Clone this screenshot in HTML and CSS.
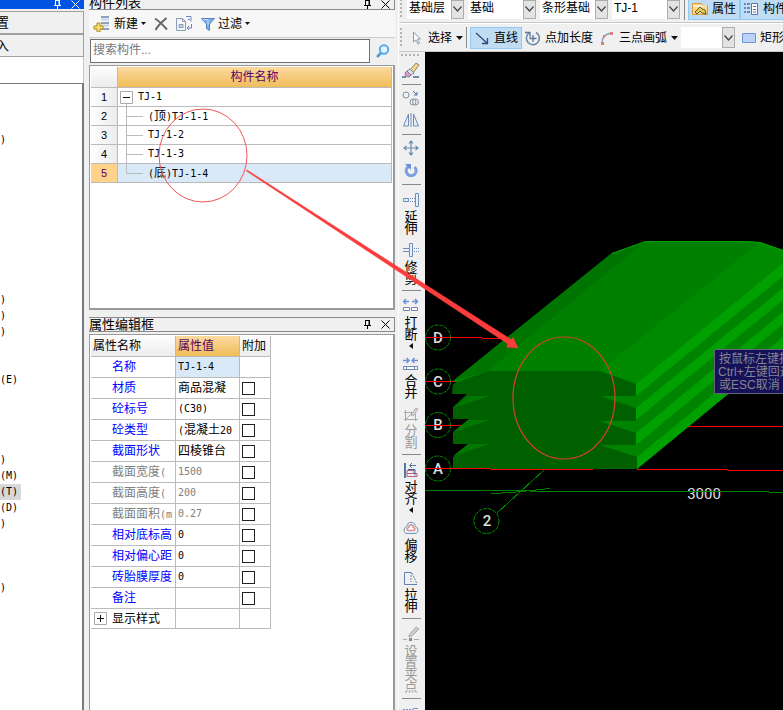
FILE: index.html
```html
<!DOCTYPE html>
<html lang="zh-CN">
<head>
<meta charset="utf-8">
<title>构件列表</title>
<link rel="stylesheet" href="styles.css">
</head>
<body>
<svg class="defs" width="0" height="0" aria-hidden="true">
  <symbol id="pin" viewBox="0 0 9 9"><path d="M2.500 0v5M2 .5h5M6 0v5M6.500 0v5M1 5.500h7M4.500 6v3" fill="none" stroke="currentColor"/></symbol>
  <symbol id="close" viewBox="0 0 9 9"><path d="M.5 .5l8 8M8.500 .5l-8 8" fill="none" stroke="currentColor"/></symbol>
  <symbol id="chev" viewBox="0 0 9 6"><path d="M.5 .5l4 4.500 4-4.500" fill="none" stroke="#444" stroke-width="1.200"/></symbol>
  <symbol id="down" viewBox="0 0 7 4"><path d="M0 0h7L3.500 4z" fill="#111"/></symbol>
  <symbol id="left" viewBox="0 0 4 6"><path d="M4 0v6L0 3z" fill="#111"/></symbol>
</svg>
<main class="app">
  <aside class="nav">
    <header class="nav-title">
      <svg width="9" height="9"><use href="#pin"/></svg>
      <svg width="9" height="9"><use href="#close"/></svg>
    </header>
    <button class="nav-btn">置</button>
    <button class="nav-btn">入</button>
    <div class="nav-gap"></div>
    <ul class="tree">
      <li></li><li></li><li></li><li>)</li><li></li><li></li><li></li><li></li><li></li><li></li><li></li><li></li><li></li>
      <li>)</li><li>)</li><li>)</li><li></li><li></li><li>(E)</li><li></li><li></li><li></li><li></li>
      <li>)</li><li>(M)</li><li><span class="current">(T)</span></li><li>(D)</li><li>)</li><li></li><li></li><li></li><li>)</li>
    </ul>
  </aside>

  <section class="middle">
    <header class="dock-title dock-title-top">
      <h2>构件列表</h2>
      <svg width="9" height="9"><use href="#pin"/></svg>
      <svg width="9" height="9"><use href="#close"/></svg>
    </header>
    <div class="list-tools">
      <button class="flat"><svg width="18" height="16" viewBox="0 0 18 16"><path d="M8 1h8M8 7h8M8 13h8" stroke="#6f87a5" stroke-width="1.500"/><path d="M8 3.500h8M8 9.500h8" stroke="#c5d4e6" stroke-width="2"/><path d="M4 8h3v3h3v3H7v3H4v-3H1v-3h3z" transform="translate(0 -1)" fill="#f6df62" stroke="#a98c2c"/></svg>新建<svg width="5" height="3"><use href="#down"/></svg></button>
      <button class="flat" aria-label="删除"><svg width="14" height="14" viewBox="0 0 14 14"><path d="M1 1.500C5 4 9 8 13 12.500M12.500 1C8 5 4 8 1.500 13" fill="none" stroke="#666" stroke-width="2"/></svg></button>
      <button class="flat" aria-label="复制"><svg width="17" height="15" viewBox="0 0 17 15"><path d="M.5 2.500h6l3 3v9h-9zM6.500 2.500v3h3" fill="#f4f6fa" stroke="#8b9ab5"/><path d="M3 8.500h4v3H3z" fill="#c7d2e4" stroke="#8b9ab5"/><path d="M10 .5h5v5M11 12h4.500V8M13 10l-2 2 2 2M12 3.500h2" fill="none" stroke="#6c86c4"/></svg></button>
      <button class="flat"><svg width="14" height="14" viewBox="0 0 14 14"><path d="M.5 1.500h13L8.500 7v6.500l-3-2V7z" fill="#7daef0" stroke="#5380c4"/><path d="M2 2.500h5v6" fill="none" stroke="#c4ddfb"/></svg>过滤<svg width="5" height="3"><use href="#down"/></svg></button>
    </div>
    <div class="search">
      <input type="text" placeholder="搜索构件..." aria-label="搜索构件">
      <button aria-label="搜索"><svg width="14" height="14" viewBox="0 0 14 14"><circle cx="8" cy="5.500" r="4.200" fill="#e2f4ff" stroke="#55aeea" stroke-width="2"/><path d="M5 9l-4 4" stroke="#4a9ada" stroke-width="2.500"/></svg></button>
    </div>
    <div class="list-pane">
      <table class="list">
        <colgroup><col class="num-col"><col></colgroup>
        <thead><tr><th></th><th class="hot">构件名称</th></tr></thead>
        <tbody>
          <tr><th>1</th><td><div class="node"><svg width="13" height="19" viewBox="0 0 13 19"><path d="M.5 3.500h12v12H.5z" fill="#fff" stroke="#aaa"/><path d="M3 9.500h7" stroke="#111"/><path d="M6.500 16v3" stroke="#bbb"/></svg><span class="m">TJ-1</span></div></td></tr>
          <tr><th>2</th><td><div class="node child"><svg width="17" height="19"><path d="M.5 0v19M0 9.500h17" stroke="#bbb"/></svg><span class="m">(<span class="c">顶</span>)TJ-1-1</span></div></td></tr>
          <tr><th>3</th><td><div class="node child"><svg width="17" height="19"><path d="M.5 0v19M0 9.500h17" stroke="#bbb"/></svg><span class="m">TJ-1-2</span></div></td></tr>
          <tr><th>4</th><td><div class="node child"><svg width="17" height="19"><path d="M.5 0v19M0 9.500h17" stroke="#bbb"/></svg><span class="m">TJ-1-3</span></div></td></tr>
          <tr class="selected"><th>5</th><td><div class="node child"><svg width="17" height="19"><path d="M.5 0v10M0 9.500h17" stroke="#bbb"/></svg><span class="m">(<span class="c">底</span>)TJ-1-4</span></div></td></tr>
        </tbody>
      </table>
    </div>
    <header class="dock-title">
      <h2>属性编辑框</h2>
      <svg width="9" height="9"><use href="#pin"/></svg>
      <svg width="9" height="9"><use href="#close"/></svg>
    </header>
    <div class="prop-pane">
      <table class="props">
        <colgroup><col class="name-col"><col class="value-col"><col class="extra-col"></colgroup>
        <thead><tr><th>属性名称</th><th class="hot">属性值</th><th>附加</th></tr></thead>
        <tbody>
          <tr><th>名称</th><td class="active m">TJ-1-4</td><td></td></tr>
          <tr><th>材质</th><td>商品混凝</td><td><input type="checkbox" aria-label="材质"></td></tr>
          <tr><th>砼标号</th><td class="m">(C30)</td><td><input type="checkbox" aria-label="砼标号"></td></tr>
          <tr><th>砼类型</th><td><span class="m">(</span>混凝土<span class="m">20</span></td><td><input type="checkbox" aria-label="砼类型"></td></tr>
          <tr><th>截面形状</th><td>四棱锥台</td><td><input type="checkbox" aria-label="截面形状"></td></tr>
          <tr class="off"><th>截面宽度<span class="m">(</span></th><td class="m">1500</td><td><input type="checkbox" aria-label="截面宽度"></td></tr>
          <tr class="off"><th>截面高度<span class="m">(</span></th><td class="m">200</td><td><input type="checkbox" aria-label="截面高度"></td></tr>
          <tr class="off"><th>截面面积<span class="m">(m</span></th><td class="m">0.27</td><td><input type="checkbox" aria-label="截面面积"></td></tr>
          <tr><th>相对底标高</th><td class="m">0</td><td><input type="checkbox" aria-label="相对底标高"></td></tr>
          <tr><th>相对偏心距</th><td class="m">0</td><td><input type="checkbox" aria-label="相对偏心距"></td></tr>
          <tr><th>砖胎膜厚度</th><td class="m">0</td><td><input type="checkbox" aria-label="砖胎膜厚度"></td></tr>
          <tr><th>备注</th><td></td><td><input type="checkbox" aria-label="备注"></td></tr>
          <tr class="group"><th><div class="node"><svg width="13" height="13"><path d="M.5 .5h12v12H.5z" fill="#fff" stroke="#aaa"/><path d="M3 6.500h7M6.500 3v7" stroke="#111"/></svg>显示样式</div></th><td></td><td></td></tr>
        </tbody>
      </table>
    </div>
  </section>

  <section class="work">
    <div class="bar bar-top">
      <span class="grip"></span>
      <span class="combo w-s"><select aria-label="楼层"><option>基础层</option></select><i><svg width="9" height="6"><use href="#chev"/></svg></i></span>
      <span class="combo w-m"><select aria-label="类别"><option>基础</option></select><i><svg width="9" height="6"><use href="#chev"/></svg></i></span>
      <span class="combo w-m"><select aria-label="构件类型"><option>条形基础</option></select><i><svg width="9" height="6"><use href="#chev"/></svg></i></span>
      <span class="combo w-m"><select aria-label="构件"><option>TJ-1</option></select><i><svg width="9" height="6"><use href="#chev"/></svg></i></span>
      <span class="vsep"></span>
      <button class="tool on"><svg width="16" height="14" viewBox="0 0 16 14"><path d="M.5 1.500h9l1 2h5v9H.5z" fill="#f7d98a" stroke="#d89a3c"/><path d="M1 4h14" stroke="#fff"/><path d="M3 10l5-5 2 2 3 1 1 4-4-1-2-2-3 3z" fill="#e9cf58" stroke="#665633"/></svg>属性</button>
      <button class="tool on"><svg width="15" height="14" viewBox="0 0 15 14"><path d="M0 2h2M3 2h3M0 6h2M3 6h3M0 10h2M3 10h3" stroke="#4a6da8" stroke-width="1.500"/><path d="M7.500 1.500h6v11h-6z" fill="#fff" stroke="#5475a8"/><path d="M9 4.500h3M9 7.500h3M9 10h3" stroke="#4a6da8"/></svg>构件</button>
    </div>
    <div class="bar bar-draw">
      <span class="grip"></span>
      <button class="tool"><svg width="16" height="16" viewBox="0 0 16 16"><path d="M5.500 2v10l2.500-2 2 4 1.500-1-2-4h3z" fill="#f6f8fa" stroke="#8d9bab"/></svg>选择<svg width="7" height="4"><use href="#down"/></svg></button>
      <span class="vsep"></span>
      <button class="tool on"><svg width="16" height="16" viewBox="0 0 16 16"><path d="M2 3l11 10M13.500 8v5.500H8" fill="none" stroke="#2c4a7c" stroke-width="1.300"/></svg>直线</button>
      <button class="tool"><svg width="16" height="16" viewBox="0 0 16 16"><path d="M4 3A6.500 6.500 0 1 0 11 2.500" fill="none" stroke="#6a84a8" stroke-width="1.500"/><path d="M0 2.500h5v5M8 5v7M4.500 8.500h7" fill="none" stroke="#5a7396" stroke-width="1.300"/></svg>点加长度</button>
      <button class="tool"><svg width="16" height="16" viewBox="0 0 16 16"><path d="M3 14c-.5-6 3-10 9-11" fill="none" stroke="#7b98c4" stroke-width="1.300"/><path d="M2 12h3v3H2zM4 5h2v3H4zM11 2h3v3h-3z" fill="#d98575"/></svg>三点画弧<svg width="7" height="4"><use href="#down"/></svg></button>
      <span class="combo w-d"><select aria-label="画弧方式"><option></option></select><i><svg width="9" height="6"><use href="#chev"/></svg></i></span>
      <button class="tool"><svg width="14" height="10" viewBox="0 0 14 10"><path d="M.5 .5h13v9H.5z" fill="#bdd2fa" stroke="#6d93dd"/></svg>矩形</button>
    </div>
    <div class="stage">
      <nav class="vbar">
        <span class="hgrip"></span>
        <button class="ico" aria-label="删除"><svg width="18" height="16" viewBox="0 0 18 16"><path d="M8 8l6-7 3 2-6 8z" fill="#f1d692" stroke="#8b8775"/><path d="M5 9l4 4-2 2c-2 0-4-1-4-4z" fill="#e39ac4" stroke="#8a7389"/><path d="M8 7l4 4-3 2-4-4z" fill="#dce7f1" stroke="#71869c"/><path d="M0 15h4M11 15h6" stroke="#416a94" stroke-width="1.500"/></svg></button>
        <hr>
        <button class="ico" aria-label="复制"><svg width="18" height="16" viewBox="0 0 18 16" fill="none" stroke="#8292a6"><circle cx="4" cy="5" r="3"/><circle cx="11" cy="12" r="3"/><circle cx="13.500" cy="12" r="3"/><path d="M11 1l4 4M15 2v3h-3" stroke="#4b719d"/></svg></button>
        <button class="ico" aria-label="镜像"><svg width="16" height="16" viewBox="0 0 16 16" fill="#e4edfb" stroke="#6f8db6"><path d="M5.500 2v12h-5zM10.500 2v12h5z"/><path d="M8 1v14"/></svg></button>
        <hr>
        <button class="ico" aria-label="移动"><svg width="16" height="16" viewBox="0 0 16 16" fill="none" stroke="#6a8bb0" stroke-width="1.200"><path d="M8 1v14M1 8h14M6 3.500l2-2.500 2 2.500M6 12.500L8 15l2-2.500M3.500 6L1 8l2.500 2M12.500 6L15 8l-2.500 2"/></svg></button>
        <button class="ico" aria-label="旋转"><svg width="16" height="16" viewBox="0 0 16 16"><path d="M11.500 5a5 5 0 1 1-6-.5" fill="none" stroke="#7b9fe0" stroke-width="3"/><path d="M2 2h6v6z" fill="#6a8fd8"/></svg></button>
        <hr>
        <button><svg width="16" height="16" viewBox="0 0 16 16" fill="#e7f1fc" stroke="#6c8fbc"><path d="M.5 6.500h5v3h-5zM12.500 1.500h3v13h-3z"/><path d="M7 6.500h5M7 9.500h5" stroke-dasharray="1 1"/></svg><span>延伸</span></button>
        <button><svg width="16" height="16" viewBox="0 0 16 16" fill="#e7f1fc" stroke="#6c8fbc"><path d="M0 6.500h6M0 9.500h6M6.500 1.500h3v13h-3z"/><path d="M11 6.500h5M11 9.500h5" stroke-dasharray="1 1"/></svg><span>修剪</span></button>
        <hr>
        <button><svg width="16" height="16" viewBox="0 0 16 16" fill="#fff" stroke="#7187b3"><path d="M.5 9.500h6v3h-6zM8.500 9.500h6v3h-6z"/><path d="M0 3.500h6M3 1L.5 3.500 3 6M9 3.500h6M12 1l2.500 2.500L12 6" fill="none" stroke="#6c93da" stroke-width="1.500"/></svg><span>打断</span><svg class="more" width="4" height="6"><use href="#left"/></svg></button>
        <button><svg width="16" height="16" viewBox="0 0 16 16" fill="#fff" stroke="#7187b3"><path d="M.5 10.500h3v3h-3zM3.500 10.500h8v3h-8zM11.500 10.500h3v3h-3z"/><path d="M0 4.500h6M3.500 2L6 4.500 3.500 7M9 4.500h6M11.500 2L9 4.500 11.500 7" fill="none" stroke="#6c93da" stroke-width="1.500"/></svg><span>合并</span></button>
        <button disabled><svg width="16" height="16" viewBox="0 0 16 16" fill="none" stroke="#a8a8a8"><path d="M1 6.500h10M1 13.500h14M2.500 4v11M12.500 8v7M2 14L14 2"/><path d="M8 9l5-7 2 1-5 7z" fill="#ddd"/></svg><span>分割</span></button>
        <hr>
        <button><svg width="16" height="16" viewBox="0 0 16 16" fill="none" stroke="#58799f"><path d="M2 1v15" stroke-width="2"/><path d="M7 3.500h6M9 1L6.500 3.500 9 6"/><path d="M4 8.500h7v3H4zM4 11.500h10v3H4z" stroke="#b75d7e"/><path d="M5 7.500h7v6" stroke="#4b64a5"/></svg><span>对齐</span><svg class="more" width="4" height="6"><use href="#left"/></svg></button>
        <button><svg width="16" height="16" viewBox="0 0 16 16"><path d="M4 6c0-5 8-5 8 0 4 2 4 7 0 7.500H4C0 13 0 8 4 6z" fill="#e7f0f8" stroke="#6f93b7"/><path d="M6 7c0-3 4-3 4 0 2 1 3 3 0 3.500H6C3 10 4 8 6 7z" fill="#fff" stroke="#dc9393" stroke-width="1.500"/></svg><span>偏移</span></button>
        <button><svg width="16" height="16" viewBox="0 0 16 16" fill="none" stroke="#5f83b3"><path d="M8 2.500H1.500v12H14"/><path d="M8 2v10M9 3l5 11" stroke-dasharray="2 1"/></svg><span>拉伸</span></button>
        <hr>
        <button disabled><svg width="16" height="16" viewBox="0 0 16 16"><path d="M6 9l7-8 3 2-7 7-3 1z" fill="#ccc" stroke="#aaa"/><path d="M0 13.500h4M11 13.500h5" stroke="#aaa"/><path d="M6 12h3v3H6z" fill="#888"/></svg><span>设置夹点</span></button>
        <hr>
        <button aria-label="更多"><svg width="16" height="16" viewBox="0 0 16 16"><path d="M0 3.500h10M1.500 6h8" stroke="#6e94c2" stroke-dasharray="2 1"/><path d="M10 2.500h5" stroke="#6e94c2"/></svg></button>
      </nav>
      <div class="view">
        <svg width="358" height="658" viewBox="425 52 358 658">
          <g fill="none" stroke="#f00" shape-rendering="crispEdges"><path d="M425 337.500h57M482 338.500h25M425 381.500h30M425 425.500h38M688 426.500h95M637 469.500h91M728 470.500h55"/></g>
          <g fill="none" stroke="#008000" shape-rendering="crispEdges"><path d="M425 490.500h105M530 491.500h239M769 492.500h14M491 493.500l20-1 20-2 19-2M544 470l-47 43"/></g>
          <path d="M453 381L612 253l34-12h94l20 1 23 8v99L637 469z" fill="#008400"/>
          <path d="M453 381L612 253l34-12L488 371z" fill="#007400"/>
          <path d="M488 371L646 241h94l20 1L600 371z" fill="#008000"/>
          <path d="M600 371L760 242l23 8v13L636 384z" fill="#008a00"/>
          <path d="M636 384l147-121v13L636 396zM636 408l147-120v12L636 420zM636 433l147-121v12L636 445zM637 457l146-120v12L637 469z" fill="#00a000"/>
          <path d="M612 253.500l34-12h94l20 1 23 8" fill="none" stroke="#00a000"/>
          <path d="M453 384l35-13h112l36 13v12h-36l36 12v13h-36l36 12v12h-36l37 12v12H453v-12l16-13h-16v-12l16-13h-16v-12l14-13h-15z" fill="#006000"/>
          <path d="M453 408l15-12h22zM453 432l15-12h22zM453 456l15-12h22z" fill="#007800"/>
          <path d="M425 468.500h65M490 469.500h103" fill="none" stroke="#f00" shape-rendering="crispEdges"/>
          <g fill="none" stroke="#009000" stroke-dasharray="4 1"><circle cx="438" cy="337.500" r="12.500"/><circle cx="438" cy="381.500" r="12.500"/><circle cx="438" cy="425" r="12.500"/><circle cx="438" cy="468.500" r="12.500"/><circle cx="486.500" cy="521" r="12.500"/></g>
          <g class="axis" text-anchor="middle"><text x="438" y="343">D</text><text x="438" y="387">C</text><text x="438" y="430">B</text><text x="438" y="474">A</text><text x="487" y="526">2</text><text class="dim" x="704" y="499">3000</text></g>
          <path d="M425 337.500h26M425 381.500h26M425 425.500h26M425 468.500h26" stroke="#f00" shape-rendering="crispEdges"/>
          <path d="M687 491.500h34" stroke="#008000" shape-rendering="crispEdges"/>
          <path d="M714.500 349.500h80v44h-80z" fill="#16125a" stroke="#66667a"/>
          <g class="hint"><text x="719" y="363">按鼠标左键指定</text><text x="718" y="376">Ctrl+左键回退</text><text x="719" y="389">或ESC取消</text></g>
        </svg>
      </div>
    </div>
  </section>
</main>
<svg class="notes" width="783" height="710" aria-hidden="true">
  <ellipse cx="203" cy="155.500" rx="44" ry="46.500" fill="none" stroke="#f25555"/>
  <ellipse cx="564" cy="398" rx="51" ry="61" fill="none" stroke="#d8402c" stroke-width="1.200"/>
  <path d="M247 170l264 169.500 2-2 5 10.500-11.500-1 1.500-3L246.500 171z" fill="#fa3c3c" stroke="#fa3c3c" stroke-width=".5"/>
</svg>
</body>
</html>
```
FILE: styles.css
```css
* { box-sizing: border-box; }

body {
  margin: 0;
  background: #f0f0f0;
  color: #000;
  font: 12px/16px "Liberation Sans", "Noto Sans CJK SC", sans-serif;
  overflow: hidden;
}

button, input, select { font: inherit; color: inherit; }
button { border: 0; padding: 0; margin: 0; background: none; }
svg { display: block; flex: none; }
.defs { position: absolute; }

.m { font-family: "DejaVu Sans Mono", "Noto Sans CJK SC", monospace; font-size: 10px; }
.c { font-size: 12px; }

.app {
  display: grid;
  grid-template-columns: 84px 306px minmax(0, 1fr);
  column-gap: 5px;
  height: 100vh;
}

/* Navigation */
.nav { display: flex; flex-direction: column; min-height: 0; }
.nav-title {
  display: flex;
  justify-content: flex-end;
  gap: 9px;
  height: 11px;
  padding-right: 4px;
  background: #0054e3;
  border-bottom: 2px solid #f0f0f0;
  color: #fff;
}
.nav-btn {
  height: 23px;
  padding: 0 3px;
  margin-left: -8px;
  text-align: left;
  border: 1px solid #a0a0a0;
  font-size: 13px;
}
.nav-gap { height: 26px; background: #fff; border-right: 1px solid #c8c8c8; }
.tree {
  flex: 1;
  margin: 0;
  padding: 0;
  list-style: none;
  background: #fff;
  border: 1px solid #767b82;
  border-width: 1px 2px 0 0;
  font: 10px/16px "DejaVu Sans Mono", monospace;
}
.tree li { height: 16px; }
.current { display: inline-block; padding-right: 3px; background: #d8d8d8; }

/* Docked panels */
.middle { display: flex; flex-direction: column; min-height: 0; }
.dock-title {
  display: flex;
  align-items: center;
  gap: 9px;
  height: 15px;
  margin-top: 7px;
  padding-right: 4px;
  border: 1px solid #8a8a8a;
  border-left: 0;
}
.dock-title h2 { flex: 1; margin: 0; font-size: 13px; font-weight: 400; line-height: 13px; }
.dock-title-top { height: 10px; margin: 0; border-top: 0; align-items: flex-end; }
.list-tools {
  display: flex;
  align-items: center;
  gap: 8px;
  height: 28px;
  padding-left: 4px;
  background: #f7f7f7;
  border-bottom: 1px solid #ccc;
}
.flat { display: flex; align-items: center; gap: 3px; }
.search { display: flex; height: 25px; padding-top: 1px; margin-bottom: 2px; }
.search input {
  flex: 1;
  min-width: 0;
  margin-left: 1px;
  padding: 0 2px 2px;
  border: 1px solid #707070;
  background: #fff;
}
.search input::placeholder { color: #777; }
.search button { display: grid; place-items: center; width: 25px; }
.list-pane, .prop-pane {
  background: #fff;
  border: 1px solid #9a9a9a;
  border-right-width: 2px;
  padding: 1px 1px 0;
}
.list-pane { height: 245px; border-bottom-width: 2px; }
.prop-pane { flex: 1; margin-top: 2px; border-bottom: 0; }

table { border-collapse: separate; border-spacing: 0; table-layout: fixed; }
th, td {
  padding: 0;
  overflow: hidden;
  white-space: nowrap;
  font-weight: 400;
  text-align: left;
  border: 1px solid #bbb;
  border-width: 0 1px 1px 0;
}
thead th { height: 21px; background: linear-gradient(#fdfdfd, #ececec); }
thead .hot { background: linear-gradient(#fbd9a0, #efbd5a); color: #5b0060; }

.list { width: 100%; }
.num-col { width: 27px; }
.list th { text-align: center; }
.list tbody th { background: linear-gradient(90deg, #fdfdfd, #ececec); font-size: 11px; }
.list tbody th, .list tbody td { height: 19px; }
.list .node { height: 18px; padding-left: 2px; overflow: hidden; }
.list .child { padding-left: 8px; }
.list .selected td { background: #d9e9f7; }
.list .selected th { background: #ffd28a; color: #5b0060; }
.node { display: flex; align-items: center; gap: 5px; }

.props { width: 180px; }
.name-col { width: 85px; }
.value-col { width: 64px; }
.extra-col { width: 31px; }
.props thead th, .props td { padding-left: 2px; }
.props tbody th, .props tbody td { height: 21px; }
.props tbody th { padding-left: 21px; color: #00f; }
.props .active { background: #d9e9f7; }
.props .off th, .props .off td { color: #808080; }
.props .group th { padding-left: 3px; color: #000; }
.props .group th, .props .group td { height: 20px; }
.props input {
  display: block;
  appearance: none;
  width: 13px;
  height: 13px;
  margin: 0;
  border: 1px solid #222;
  background: #fff;
}

/* Drawing area */
.work { display: flex; flex-direction: column; min-width: 0; min-height: 0; margin-left: -2px; border-left: 1px solid #fff; }
.bar { display: flex; align-items: center; overflow: hidden; border-bottom: 1px solid #c8c8c8; }
.bar-top { height: 23px; padding-bottom: 4px; }
.bar-draw { height: 29px; border-top: 1px solid #fff; }
.grip {
  flex: none;
  width: 2px;
  height: 20px;
  margin: 0 5px 0 1px;
  background: repeating-linear-gradient(#b4b4b4 0 2px, transparent 2px 4px);
}
.combo { position: relative; flex: none; height: 19px; margin-right: 4px; }
.combo select {
  appearance: none;
  width: 100%;
  height: 100%;
  padding: 0 0 2px 2px;
  border: 0;
  border-radius: 0;
  background: #fff;
}
.combo i {
  position: absolute;
  inset: 0 0 0 auto;
  display: grid;
  place-items: center;
  width: 13px;
  border: 1px solid #adadad;
  background: #e3e3e3;
  pointer-events: none;
}
.w-s { width: 57px; }
.w-m { width: 68px; }
.w-d { width: 54px; height: 21px; }
.vsep { flex: none; width: 1px; height: 21px; margin-right: 3px; background: #888; }
.tool {
  display: flex;
  flex: none;
  align-items: center;
  gap: 4px;
  height: 22px;
  padding: 0 2px;
  border: 1px solid transparent;
  white-space: nowrap;
}
.tool.on { padding: 0 3px; border-color: #90c8f6; background: #c0dcf3; }
.bar-draw .grip { margin-right: 3px; }
.stage { display: flex; flex: 1; min-height: 0; }
.vbar { display: flex; flex-direction: column; flex: none; width: 26px; padding-right: 2px; overflow: hidden; }
.hgrip {
  flex: none;
  height: 2px;
  margin: 2px 2px 3px;
  background: repeating-linear-gradient(90deg, #b4b4b4 0 2px, transparent 2px 4px);
}
.vbar hr { flex: none; width: 19px; height: 1px; margin: 3px auto 2px; border: 0; background: #888; }
.vbar button {
  display: flex;
  flex: none;
  flex-direction: column;
  align-items: center;
  gap: 3px;
  padding: 5px 0 2px;
}
.vbar .ico { padding: 3px 0; }
.vbar span:not(.hgrip) { width: 13px; font-size: 13px; line-height: 12px; word-break: break-all; }
.vbar button:disabled { color: #999; }
.vbar .more { height: 8px; margin-top: -3px; padding-top: 2px; }
.view { flex: 1; min-width: 0; overflow: hidden; background: #000; }
.axis { font: 500 15px Roboto, sans-serif; fill: #ddd; }
.axis .dim { font-weight: 400; }
.hint { font: 12px "Liberation Sans", "Noto Sans CJK SC", sans-serif; fill: #85858f; }

/* Markup over the windows */
.notes { position: absolute; top: 0; left: 0; pointer-events: none; }
```
